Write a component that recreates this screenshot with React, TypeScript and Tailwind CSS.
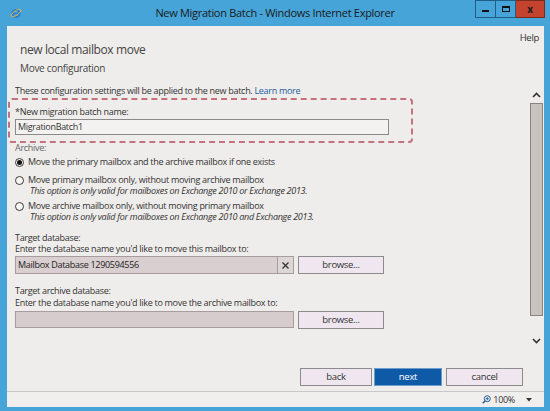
import React from "react";

type Option = { label: string; note?: string; checked?: boolean };

const archiveOptions: Option[] = [
  { label: "Move the primary mailbox and the archive mailbox if one exists", checked: true },
  {
    label: "Move primary mailbox only, without moving archive mailbox",
    note: "This option is only valid for mailboxes on Exchange 2010 or Exchange 2013.",
  },
  {
    label: "Move archive mailbox only, without moving primary mailbox",
    note: "This option is only valid for mailboxes on Exchange 2010 and Exchange 2013.",
  },
];

function IeLogo() {
  return (
    <svg width="12" height="12" viewBox="0 0 12 12">
      <circle cx="6" cy="6.5" r="3.6" fill="none" stroke="#2c7fd0" strokeWidth="2" />
      <rect x="3" y="5.9" width="6" height="1.3" fill="#2c7fd0" />
      <ellipse cx="6" cy="6" rx="5.6" ry="2.2" fill="none" stroke="#e8b23a" strokeWidth="0.9" transform="rotate(-35 6 6)" />
    </svg>
  );
}

function Radio({ checked }: { checked?: boolean }) {
  return (
    <span className="w-[9px] h-[9px] rounded-full border border-[#3a3a3a] bg-[#f7f6f5] flex items-center justify-center shrink-0">
      {checked && <span className="w-[5px] h-[5px] rounded-full bg-[#111]" />}
    </span>
  );
}

function Browse() {
  return (
    <button className="w-[86px] h-[18px] ml-[4px] border border-[#8c8c8c] bg-[#efe6ef] text-[9.5px] text-[#333] leading-none">
      browse...
    </button>
  );
}

export default function App() {
  return (
    <div className="w-[550px] h-[411px] bg-[#46a4d8] flex flex-col overflow-hidden font-['Open_Sans',sans-serif] text-[#333] tracking-[-0.3px]">
      {/* title bar */}
      <div className="h-[26px] flex items-start shrink-0">
        <div className="w-[75px] pl-[10px] pt-[7px]">
          <IeLogo />
        </div>
        <div className="flex-1 text-center text-[11px] leading-[26px] text-[#1a1a1a]">
          New Migration Batch - Windows Internet Explorer
        </div>
        <div className="w-[75px] flex h-[18px]">
          <div className="w-[21px] h-full border border-[#1f5f86] flex items-center justify-center">
            <span className="w-[7px] h-[2px] bg-[#111] mt-[3px]" />
          </div>
          <div className="w-[20px] h-full border border-l-0 border-[#1f5f86] flex items-center justify-center">
            <span className="w-[8px] h-[6px] border-[1.5px] border-t-[2px] border-[#111]" />
          </div>
          <div className="w-[29px] h-full bg-[#c4432f] border border-l-0 border-[#7d2a1e] flex items-center justify-center text-[10px] font-bold text-[#1a1a1a]">
            x
          </div>
        </div>
      </div>

      {/* window body */}
      <div className="flex-1 mx-[6px] ml-[7px] mb-[4px] bg-[#efedeb] flex flex-col">
        {/* header */}
        <div className="h-[56px] shrink-0 flex flex-col">
          <div className="h-[12px] mt-[6px] pr-[5px] text-right text-[9.5px] leading-[12px] text-[#333]">Help</div>
          <div className="h-[16px] -mt-[2px] pl-[13px] text-[12px] tracking-[-0.4px] leading-[16px] text-[#444]">new local mailbox move</div>
          <div className="h-[16px] mt-[2px] pl-[13px] text-[10px] leading-[16px] text-[#444]">Move configuration</div>
        </div>

        {/* scrolling form */}
        <div className="h-[268px] flex shrink-0">
          <div className="flex-1 pl-[8px] text-[9px]">
            <div className="h-[12px] mt-[3px] leading-[12px]">
              These configuration settings will be applied to the new batch.{" "}
              <span className="text-[#1e5c9c]">Learn more</span>
            </div>

            <div className="w-[405px] h-[45px] mt-[1px] -ml-[7px] border-2 border-dashed border-[#c5727e] rounded-[4px] px-[5px] pt-[6px]">
              <div className="h-[12px] leading-[12px]">*New migration batch name:</div>
              <div className="w-[374px] h-[16px] mt-[1px] border border-[#8a8a8a] bg-[#f4f2f1] pl-[2px] leading-[14px]">
                MigrationBatch1
              </div>
            </div>

            <div className="h-[10px] leading-[10px] text-[#666]">Archive:</div>
            {archiveOptions.map((o, i) => (
              <div key={i} className={i === 0 ? "mt-[4px]" : i === 1 ? "mt-[8px]" : "mt-[5px]"}>
                <div className="h-[10px] flex items-center gap-[4px] leading-[10px]">
                  <Radio checked={o.checked} />
                  <span>{o.label}</span>
                </div>
                {o.note && (
                  <div className="h-[11px] mt-[0px] pl-[15px] leading-[11px] italic">{o.note}</div>
                )}
              </div>
            ))}

            <div className="h-[11px] mt-[10px] leading-[11px]">Target database:</div>
            <div className="h-[11px] mt-[0px] leading-[11px]">Enter the database name you'd like to move this mailbox to:</div>
            <div className="h-[18px] mt-[2px] flex">
              <div className="w-[262px] h-full border border-[#a99c9e] border-r-0 bg-[#d9cfd0] pl-[2px] leading-[16px] text-[#222]">
                Mailbox Database 1290594556
              </div>
              <div className="w-[17px] h-full border border-[#a99c9e] bg-[#ddd6d6] flex items-center justify-center">
                <svg width="7" height="7" viewBox="0 0 7 7">
                  <path d="M0.5 0.5 L6.5 6.5 M6.5 0.5 L0.5 6.5" stroke="#333" strokeWidth="1.3" />
                </svg>
              </div>
              <Browse />
            </div>

            <div className="h-[11px] mt-[11px] leading-[11px]">Target archive database:</div>
            <div className="h-[11px] mt-[1px] leading-[11px]">Enter the database name you'd like to move the archive mailbox to:</div>
            <div className="h-[17px] mt-[3px] flex">
              <div className="w-[279px] h-full border border-[#a99c9e] bg-[#d6cccd]" />
              <Browse />
            </div>
          </div>

          {/* scrollbar */}
          <div className="w-[15px] flex flex-col items-center">
            <svg width="9" height="6" viewBox="0 0 9 6" className="mt-[10px]">
              <path d="M1 5 L4.5 1.5 L8 5" fill="none" stroke="#333" strokeWidth="1.6" />
            </svg>
            <div className="w-[13px] h-[213px] mt-[5px] bg-[#c9c2be] border border-[#8a8480]" />
            <svg width="9" height="6" viewBox="0 0 9 6" className="mt-[22px]">
              <path d="M1 1 L4.5 4.5 L8 1" fill="none" stroke="#333" strokeWidth="1.6" />
            </svg>
          </div>
        </div>

        {/* dialog buttons */}
        <div className="flex-1 flex items-start justify-end pt-[18px] pr-[21px] text-[9.5px]">
          <button className="w-[72px] h-[18px] border border-[#8c8c8c] bg-[#efe6ef] leading-none">back</button>
          <button className="w-[68px] h-[18px] ml-[2px] border border-[#6c9ccc] bg-[#0f5aa6] text-white leading-none">next</button>
          <button className="w-[77px] h-[18px] ml-[4px] border border-[#8c8c8c] bg-[#efe6ef] leading-none">cancel</button>
        </div>

        {/* status bar */}
        <div className="h-[16px] shrink-0 border-t border-[#c8c8c8] bg-[#f0efee] flex items-center justify-end pr-[12px] text-[9px]">
          <svg width="9" height="9" viewBox="0 0 9 9">
            <circle cx="5.3" cy="3.7" r="3" fill="#dfe8f3" stroke="#2f5f96" strokeWidth="1" />
            <path d="M3.8 3.7 H6.8 M5.3 2.2 V5.2" stroke="#2f5f96" strokeWidth="0.9" />
            <path d="M3.2 5.8 L0.8 8.2" stroke="#2f5f96" strokeWidth="1.6" />
          </svg>
          <span className="ml-[2px]">100%</span>
          <svg width="6" height="4" viewBox="0 0 6 4" className="ml-[11px]">
            <path d="M0 0 H6 L3 3.5 Z" fill="#333" />
          </svg>
        </div>
      </div>
    </div>
  );
}
